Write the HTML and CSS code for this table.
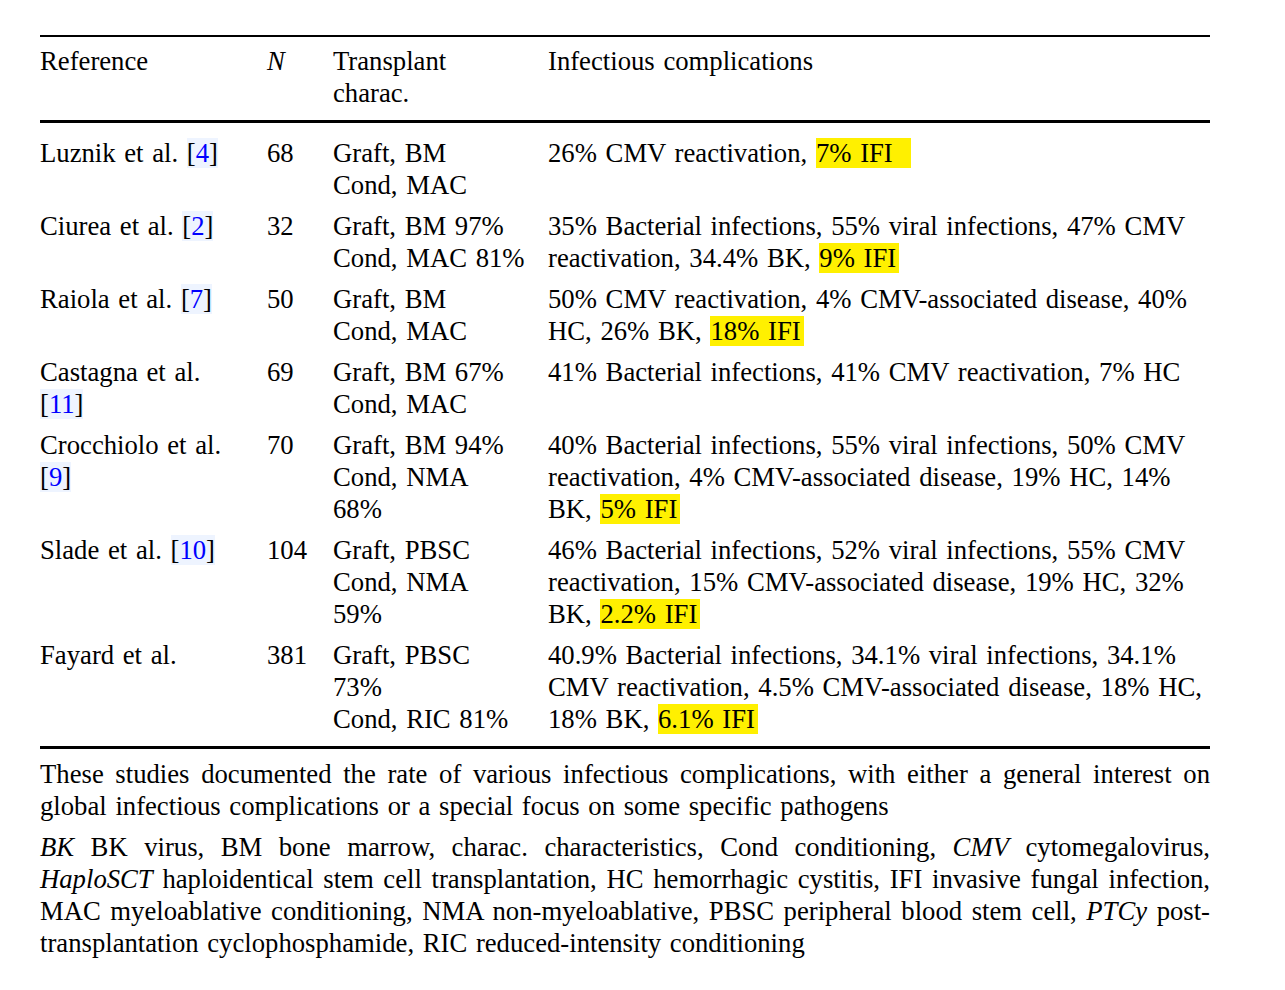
FILE: index.html
```html
<!DOCTYPE html>
<html lang="en">
<head>
<meta charset="utf-8">
<title>Infectious complications after HaploSCT</title>
<link rel="stylesheet" href="styles.css">
</head>
<body>
<div class="page">
  <table class="tbl">
    <colgroup>
      <col class="c-ref">
      <col class="c-n">
      <col class="c-tr">
      <col class="c-inf">
    </colgroup>
    <thead>
      <tr>
        <th>Reference</th>
        <th><i>N</i></th>
        <th>Transplant<br>charac.</th>
        <th>Infectious complications</th>
      </tr>
    </thead>
    <tbody>
      <tr>
        <td>Luznik et al. <span class="ref">[<a>4</a>]</span></td>
        <td>68</td>
        <td>Graft, BM<br>Cond, MAC</td>
        <td>26% CMV reactivation, <mark class="hl hl-long">7% IFI</mark></td>
      </tr>
      <tr>
        <td>Ciurea et al. <span class="ref">[<a>2</a>]</span></td>
        <td>32</td>
        <td>Graft, BM 97%<br>Cond, MAC 81%</td>
        <td>35% Bacterial infections, 55% viral infections, 47% CMV reactivation, 34.4% BK, <mark class="hl">9% IFI</mark></td>
      </tr>
      <tr>
        <td>Raiola et al. <span class="ref">[<a>7</a>]</span></td>
        <td>50</td>
        <td>Graft, BM<br>Cond, MAC</td>
        <td>50% CMV reactivation, 4% CMV-associated disease, 40% HC, 26% BK, <mark class="hl">18% IFI</mark></td>
      </tr>
      <tr>
        <td>Castagna et al.<br><span class="ref">[<a>11</a>]</span></td>
        <td>69</td>
        <td>Graft, BM 67%<br>Cond, MAC</td>
        <td>41% Bacterial infections, 41% CMV reactivation, 7% HC</td>
      </tr>
      <tr>
        <td>Crocchiolo et al.<br><span class="ref">[<a>9</a>]</span></td>
        <td>70</td>
        <td>Graft, BM 94%<br>Cond, NMA<br>68%</td>
        <td>40% Bacterial infections, 55% viral infections, 50% CMV reactivation, 4% CMV-associated disease, 19% HC, 14% BK, <mark class="hl">5% IFI</mark></td>
      </tr>
      <tr>
        <td>Slade et al. <span class="ref">[<a>10</a>]</span></td>
        <td>104</td>
        <td>Graft, PBSC<br>Cond, NMA<br>59%</td>
        <td>46% Bacterial infections, 52% viral infections, 55% CMV reactivation, 15% CMV-associated disease, 19% HC, 32% BK, <mark class="hl">2.2% IFI</mark></td>
      </tr>
      <tr>
        <td>Fayard et al.</td>
        <td>381</td>
        <td>Graft, PBSC<br>73%<br>Cond, RIC 81%</td>
        <td>40.9% Bacterial infections, 34.1% viral infections, 34.1% CMV reactivation, 4.5% CMV-associated disease, 18% HC, 18% BK, <mark class="hl">6.1% IFI</mark></td>
      </tr>
    </tbody>
  </table>
  <p class="note">These studies documented the rate of various infectious complications, with either a general interest on global infectious complications or a special focus on some specific pathogens</p>
  <p class="note"><i>BK</i> BK virus, BM bone marrow, charac. characteristics, Cond conditioning, <i>CMV</i> cytomegalovirus, <i>HaploSCT</i> haploidentical stem cell transplantation, HC hemorrhagic cystitis, IFI invasive fungal infection, MAC myeloablative conditioning, NMA non-myeloablative, PBSC peripheral blood stem cell, <i>PTCy</i> post-transplantation cyclophosphamide, RIC reduced-intensity conditioning</p>
</div>
</body>
</html>
```

FILE: styles.css
```css
html, body {
  margin: 0;
  padding: 0;
  background: #ffffff;
}

body {
  font-family: "Liberation Serif", "Times New Roman", serif;
  font-size: 26.7px;
  line-height: 32px;
  word-spacing: 2px;
  color: #000000;
}

.page {
  width: 1170px;
  margin: 35px 0 0 40px;
}

.tbl {
  width: 100%;
  border-collapse: collapse;
  table-layout: fixed;
}

.c-ref { width: 227px; }
.c-n { width: 66px; }
.c-tr { width: 215px; }
.c-inf { width: 662px; }

.tbl th,
.tbl td {
  text-align: left;
  vertical-align: top;
  font-weight: normal;
  padding: 0 0 9px 0;
}

.tbl thead tr {
  border-top: 2px solid #000;
  border-bottom: 3px solid #000;
}

.tbl thead th {
  padding-top: 8px;
  padding-bottom: 11px;
}

.tbl tbody tr:first-child td {
  padding-top: 14px;
}

.tbl tbody tr:last-child {
  border-bottom: 3px solid #000;
}

.tbl tbody tr:last-child td {
  padding-bottom: 11px;
}

.ref {
  background: #eef4ff;
}

.ref a {
  color: #0000ff;
}

.hl {
  background: #fff000;
  color: #000;
  box-shadow: 3px 0 0 #fff000;
}

.hl-long {
  box-shadow: 18px 0 0 #fff000;
}

.note {
  margin: 9px 0 0 0;
  text-align: justify;
}

.note + .note {
  margin-top: 9px;
}
```
